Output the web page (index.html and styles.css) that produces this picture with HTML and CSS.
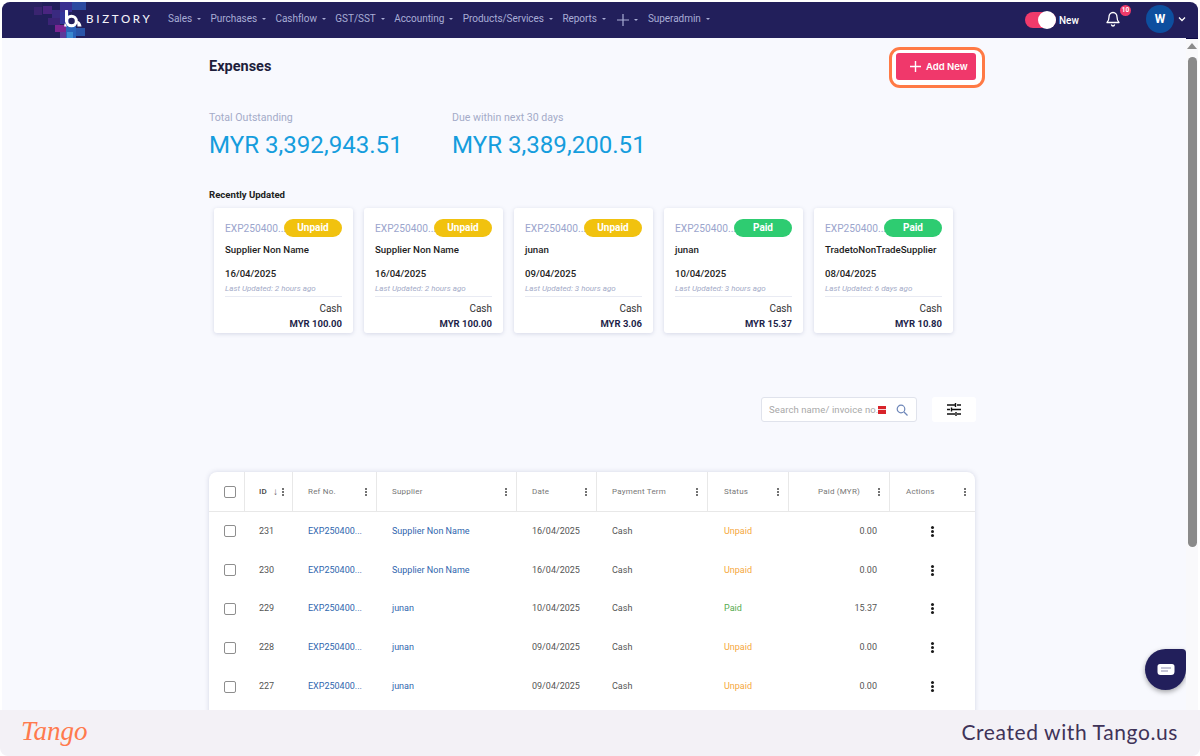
FILE: index.html
```html
<!DOCTYPE html>
<html lang="en">
<head>
<meta charset="utf-8">
<title>Expenses - Biztory</title>
<link rel="stylesheet" href="styles.css">
</head>
<body>
<div class="frame">
  <div class="app">
    <header class="topbar">
      <svg class="mosaic" width="70" height="36" viewBox="0 0 70 36">
        <rect x="0" y="0" width="22" height="8" fill="#2a2260"/>
        <rect x="14" y="5" width="8" height="8" fill="#3a2470"/>
        <rect x="23" y="4" width="9" height="8" fill="#4a2580"/>
        <rect x="32" y="8" width="8" height="8" fill="#3a2a80"/>
        <rect x="40" y="0" width="12" height="10" fill="#3a2f90"/>
        <rect x="52" y="0" width="14" height="8" fill="#2c4aa0"/>
        <rect x="40" y="10" width="9" height="12" fill="#33359a"/>
        <rect x="28" y="16" width="12" height="7" fill="#3b2376"/>
        <rect x="35" y="23" width="11" height="7" fill="#7a2490"/>
        <rect x="46" y="22" width="10" height="14" fill="#2a62b8"/>
        <rect x="56" y="26" width="9" height="8" fill="#2a55a8"/>
        <rect x="47" y="30" width="6" height="6" fill="#3a8ad0"/>
        <rect x="40" y="30" width="6" height="6" fill="#5a3a9a"/>
      </svg>
      <div class="brand">
        <svg class="brand-icon" width="18" height="18" viewBox="0 0 18 18">
          <path d="M2.500 1v10" stroke="#fff" stroke-width="3" stroke-linecap="round" fill="none"/>
          <circle cx="7.500" cy="11" r="4.800" fill="none" stroke="#fff" stroke-width="3"/>
          <path d="M13 11c2.500 0 4 2 4.500 5.500h-4z" fill="#fff"/>
          <path d="M1 13c-.5 1-.8 2-.8 3.500H3z" fill="#fff"/>
        </svg>
        <span class="brand-name">BIZTORY</span>
      </div>
      <nav class="nav">
        <a class="nav-item">Sales<i class="caret"></i></a>
        <a class="nav-item">Purchases<i class="caret"></i></a>
        <a class="nav-item">Cashflow<i class="caret"></i></a>
        <a class="nav-item">GST/SST<i class="caret"></i></a>
        <a class="nav-item">Accounting<i class="caret"></i></a>
        <a class="nav-item">Products/Services<i class="caret"></i></a>
        <a class="nav-item nav-reports">Reports<i class="caret"></i></a>
        <a class="nav-item nav-plus"><svg width="12" height="12" viewBox="0 0 12 12"><path d="M6 0v12M0 6h12" stroke="#a9add6" stroke-width="1.200"/></svg><i class="caret"></i></a>
        <a class="nav-item">Superadmin<i class="caret"></i></a>
      </nav>
      <div class="top-right">
        <span class="toggle"><span class="knob"></span></span>
        <span class="toggle-label">New</span>
        <span class="bell">
          <svg width="14" height="16" viewBox="0 0 14 16"><path d="M7 1.500c-2.600 0-4 2-4 4.500 0 3-1 4.500-2 5.500h12c-1-1-2-2.500-2-5.500 0-2.500-1.400-4.500-4-4.500zM5.300 13.500c.3 1 1 1.500 1.700 1.500s1.400-.5 1.700-1.500" fill="none" stroke="#fff" stroke-width="1.300" stroke-linejoin="round"/></svg>
          <b class="badge">10</b>
        </span>
        <span class="avatar">W</span>
        <svg class="chev" width="8" height="6" viewBox="0 0 8 6"><path d="M1 1.500l3 3 3-3" fill="none" stroke="#fff" stroke-width="1.300"/></svg>
      </div>
    </header>
    <div class="body">
      <main class="main">
        <div class="page">
          <div class="title-row">
            <h1 class="title">Expenses</h1>
            <span class="add-ring">
              <button class="add-btn"><svg width="11" height="11" viewBox="0 0 11 11"><path d="M5.500 0v11M0 5.500h11" stroke="#fff" stroke-width="1.400"/></svg>Add New</button>
            </span>
          </div>
          <div class="stats">
            <div class="stat stat-first">
              <div class="stat-label">Total Outstanding</div>
              <div class="stat-value">MYR 3,392,943.51</div>
            </div>
            <div class="stat">
              <div class="stat-label">Due within next 30 days</div>
              <div class="stat-value">MYR 3,389,200.51</div>
            </div>
          </div>
          <h2 class="recent-title">Recently Updated</h2>
          <div class="cards">
            <article class="card">
              <div class="card-top"><span class="card-ref">EXP250400...</span><span class="pill pill-unpaid">Unpaid</span></div>
              <div class="card-name">Supplier Non Name</div>
              <div class="card-date">16/04/2025</div>
              <div class="card-updated">Last Updated: 2 hours ago</div>
              <div class="card-term">Cash</div>
              <div class="card-amount">MYR 100.00</div>
            </article>
            <article class="card">
              <div class="card-top"><span class="card-ref">EXP250400...</span><span class="pill pill-unpaid">Unpaid</span></div>
              <div class="card-name">Supplier Non Name</div>
              <div class="card-date">16/04/2025</div>
              <div class="card-updated">Last Updated: 2 hours ago</div>
              <div class="card-term">Cash</div>
              <div class="card-amount">MYR 100.00</div>
            </article>
            <article class="card">
              <div class="card-top"><span class="card-ref">EXP250400...</span><span class="pill pill-unpaid">Unpaid</span></div>
              <div class="card-name">junan</div>
              <div class="card-date">09/04/2025</div>
              <div class="card-updated">Last Updated: 3 hours ago</div>
              <div class="card-term">Cash</div>
              <div class="card-amount">MYR 3.06</div>
            </article>
            <article class="card">
              <div class="card-top"><span class="card-ref">EXP250400...</span><span class="pill pill-paid">Paid</span></div>
              <div class="card-name">junan</div>
              <div class="card-date">10/04/2025</div>
              <div class="card-updated">Last Updated: 3 hours ago</div>
              <div class="card-term">Cash</div>
              <div class="card-amount">MYR 15.37</div>
            </article>
            <article class="card">
              <div class="card-top"><span class="card-ref">EXP250400...</span><span class="pill pill-paid">Paid</span></div>
              <div class="card-name">TradetoNonTradeSupplier</div>
              <div class="card-date">08/04/2025</div>
              <div class="card-updated">Last Updated: 6 days ago</div>
              <div class="card-term">Cash</div>
              <div class="card-amount">MYR 10.80</div>
            </article>
          </div>
          <div class="tools">
            <div class="search">
              <span class="search-text">Search name/ invoice no.</span>
              <span class="search-flag"></span>
              <svg class="search-icon" width="12" height="12" viewBox="0 0 12 12"><circle cx="5" cy="5" r="3.800" fill="none" stroke="#6d86b8" stroke-width="1.200"/><path d="M8 8l3.500 3.500" stroke="#6d86b8" stroke-width="1.300"/></svg>
            </div>
            <button class="filter">
              <svg width="14" height="13" viewBox="0 0 14 13"><path d="M0 2h8M10 2h4M8.500 0v4M0 6.500h3M5 6.500h9M4.500 4.500v4M0 11h8M10 11h4M9 9v4" stroke="#111" stroke-width="1.400" fill="none"/></svg>
            </button>
          </div>
          <section class="table">
            <div class="row head">
              <div class="cell cell-check"><span class="check"></span></div>
              <div class="cell cell-id"><b>ID</b><span class="sort">↓</span><i class="kebab small"></i></div>
              <div class="cell">Ref No.<i class="kebab"></i></div>
              <div class="cell">Supplier<i class="kebab"></i></div>
              <div class="cell">Date<i class="kebab"></i></div>
              <div class="cell">Payment Term<i class="kebab"></i></div>
              <div class="cell cell-status">Status<i class="kebab"></i></div>
              <div class="cell cell-paid">Paid (MYR)<i class="kebab"></i></div>
              <div class="cell cell-status">Actions<i class="kebab"></i></div>
            </div>
            <div class="row">
              <div class="cell cell-check"><span class="check"></span></div>
              <div class="cell cell-id">231</div><div class="cell link">EXP250400...</div><div class="cell link">Supplier Non Name</div><div class="cell">16/04/2025</div><div class="cell">Cash</div><div class="cell cell-status unpaid">Unpaid</div><div class="cell num">0.00</div><div class="cell action"><i class="dots"></i></div>
            </div>
            <div class="row">
              <div class="cell cell-check"><span class="check"></span></div>
              <div class="cell cell-id">230</div><div class="cell link">EXP250400...</div><div class="cell link">Supplier Non Name</div><div class="cell">16/04/2025</div><div class="cell">Cash</div><div class="cell cell-status unpaid">Unpaid</div><div class="cell num">0.00</div><div class="cell action"><i class="dots"></i></div>
            </div>
            <div class="row">
              <div class="cell cell-check"><span class="check"></span></div>
              <div class="cell cell-id">229</div><div class="cell link">EXP250400...</div><div class="cell link">junan</div><div class="cell">10/04/2025</div><div class="cell">Cash</div><div class="cell cell-status paid">Paid</div><div class="cell num">15.37</div><div class="cell action"><i class="dots"></i></div>
            </div>
            <div class="row">
              <div class="cell cell-check"><span class="check"></span></div>
              <div class="cell cell-id">228</div><div class="cell link">EXP250400...</div><div class="cell link">junan</div><div class="cell">09/04/2025</div><div class="cell">Cash</div><div class="cell cell-status unpaid">Unpaid</div><div class="cell num">0.00</div><div class="cell action"><i class="dots"></i></div>
            </div>
            <div class="row">
              <div class="cell cell-check"><span class="check"></span></div>
              <div class="cell cell-id">227</div><div class="cell link">EXP250400...</div><div class="cell link">junan</div><div class="cell">09/04/2025</div><div class="cell">Cash</div><div class="cell cell-status unpaid">Unpaid</div><div class="cell num">0.00</div><div class="cell action"><i class="dots"></i></div>
            </div>
          </section>
        </div>
        <button class="chat">
          <svg width="18" height="14" viewBox="0 0 18 14"><path d="M3 1h12a2.500 2.500 0 0 1 2.500 2.500v5A3.500 3.500 0 0 1 14 12H3.500A3 3 0 0 1 .5 9V3.500A2.500 2.500 0 0 1 3 1z" fill="#fff"/><path d="M4 5h10M4 8h7" stroke="#8d8bb0" stroke-width="1"/></svg>
        </button>
      </main>
      <aside class="scrollbar">
        <span class="arrow"></span>
        <span class="thumb"></span>
      </aside>
    </div>
  </div>
  <footer class="footer">
    <span class="tango">Tango</span>
    <span class="created">Created with Tango.us</span>
  </footer>
</div>
</body>
</html>
```

FILE: styles.css
```css
* { box-sizing: border-box; }
html, body { margin: 0; height: 100%; overflow: hidden; background: #fff; }
body { font-family: Roboto, "Liberation Sans", sans-serif; color: #333; }
i { font-style: normal; }
button { border: 0; padding: 0; font: inherit; cursor: pointer; }

.frame { width: 1200px; height: 756px; display: flex; flex-direction: column; background: #fff; }
.app { height: 710px; padding: 2px 2px 0; display: flex; flex-direction: column; }

/* Top bar */
.topbar { position: relative; height: 36px; flex: none; display: flex; align-items: center; padding-bottom: 3px; background: #221f5b; border-radius: 8px 8px 0 0; box-shadow: 0 1px 0 #0d0b45; overflow: hidden; color: #fff; }
.mosaic { position: absolute; left: 18px; top: 0; }
.brand { position: relative; display: flex; align-items: center; margin-left: 62px; width: 104px; }
.brand-icon { flex: none; }
.brand-name { margin-left: 4px; font: 500 11.500px Lato, sans-serif; letter-spacing: 2.700px; color: #f2f2f8; }
.nav { display: flex; align-items: center; }
.nav-item { display: flex; align-items: center; font-size: 10px; letter-spacing: -.05px; color: #a9add6; white-space: nowrap; margin-right: 9.500px; }
.nav-reports { margin-right: 11.500px; }
.nav-plus { margin-top: 2px; }
.caret { margin-left: 5px; width: 0; height: 0; border: 2.200px solid transparent; border-top: 2.400px solid #a9add6; border-bottom: 0; }
.top-right { margin-left: auto; display: flex; align-items: center; }
.toggle { position: relative; width: 31px; height: 16px; margin-top: 3px; border-radius: 8px; background: #f03a6b; }
.knob { position: absolute; right: 0; top: -1px; width: 18px; height: 18px; border-radius: 50%; background: #fff; }
.toggle-label { margin-left: 3px; margin-top: 3px; font-size: 10px; font-weight: 500; width: 47px; }
.bell { position: relative; display: flex; margin-right: 26px; }
.badge { position: absolute; left: 14px; top: -6px; width: 11px; height: 11px; border-radius: 50%; background: #ef3a6a; font-size: 6.500px; line-height: 11px; text-align: center; color: #fff; }
.avatar { width: 28px; height: 28px; border-radius: 50%; background: #0d4f9f; display: flex; align-items: center; justify-content: center; font-size: 12px; font-weight: 700; }
.chev { margin: 0 12px 0 4px; }

/* Layout */
.body { flex: 1; min-height: 0; display: flex; }
.main { position: relative; flex: 1; min-width: 0; background: #f8f9fe; overflow: hidden; }
.page { width: 769px; margin-left: 206px; }
.scrollbar { flex: none; width: 12px; background: #f9f9fb; display: flex; flex-direction: column; align-items: center; }
.arrow { margin-top: 5px; width: 0; height: 0; border: 5px solid transparent; border-bottom: 6px solid #8c8c8c; border-top: 0; }
.thumb { margin-top: 8px; width: 9px; height: 490px; border-radius: 5px; background: #8a8a8a; }

/* Heading */
.title-row { display: flex; align-items: center; justify-content: space-between; height: 41px; margin-top: 9px; }
.title { margin: 0 0 3px 1px; font-size: 14.500px; font-weight: 700; color: #1e1e3c; }
.add-ring { display: block; padding: 3px 6px 5px 4px; margin-right: -8px; border: 3px solid #ff7a45; border-radius: 11px; background: #fff; }
.add-btn { display: flex; align-items: center; gap: 5px; width: 80px; height: 27px; padding-left: 14px; border-radius: 3px; background: #f0386b; color: #fff; font: 600 9.500px Inter, sans-serif; }
.stats { display: flex; margin-top: 23px; }
.stat-first { width: 243px; }
.stat-label { margin-left: 1px; font-size: 10.600px; line-height: 13px; color: #a4abc8; }
.stat-value { margin: 7px 0 0 1px; font-size: 24.100px; line-height: 29px; color: #159ddd; }
.recent-title { margin: 29px 0 0 1px; font-size: 9.600px; line-height: 12px; font-weight: 700; color: #222; }

/* Cards */
.cards { display: flex; gap: 11px; margin: 7px 0 0 6px; }
.card { width: 139px; height: 125px; padding: 11px 11px 0; border-radius: 3px; background: #fff; box-shadow: 0 1px 4px rgba(60, 70, 130, .18); }
.card-top { display: flex; align-items: center; justify-content: space-between; height: 18px; }
.card-ref { min-width: 0; font-size: 10.200px; color: #9ba5cd; white-space: nowrap; }
.pill { flex: none; width: 58px; height: 18px; border-radius: 9px; text-align: center; font-size: 10px; font-weight: 700; line-height: 18px; color: #fff; }
.pill-unpaid { background: #f1c20f; }
.pill-paid { background: #2ecc71; }
.card-name { margin-top: 6px; font-size: 9.700px; line-height: 13px; font-weight: 500; color: #1d1d1d; }
.card-date { margin-top: 11px; font-size: 9.600px; line-height: 13px; font-weight: 500; color: #222; }
.card-updated { margin-top: 4px; padding-bottom: 2px; font-size: 8px; line-height: 10px; font-style: italic; color: #a4abc8; border-bottom: 1px solid #e9ebf3; }
.card-term { margin-top: 5px; text-align: right; font-size: 10px; line-height: 14px; color: #333; }
.card-amount { margin-top: 1px; text-align: right; font-size: 9.500px; line-height: 14px; font-weight: 700; color: #1d1f4a; }

/* Tools */
.tools { display: flex; justify-content: flex-end; gap: 15px; margin-top: 64px; margin-right: 1px; }
.search { display: flex; align-items: center; width: 156px; height: 25px; padding-left: 7px; border: 1px solid #e0e3ec; border-radius: 3px; background: #fff; }
.search-text { width: 109px; flex: none; font-size: 9.500px; letter-spacing: .1px; color: #a8a8a8; white-space: nowrap; }
.search-flag { width: 8px; height: 8px; flex: none; margin-right: 10px; background: linear-gradient(#d8232a 0 3px, #f5d5d5 3px 4px, #d8232a 4px); }
.filter { width: 44px; height: 25px; border-radius: 3px; background: #fff; display: flex; align-items: center; justify-content: center; }

/* Table */
.table { margin: 50px 0 0 1px; padding-bottom: 30px; width: 766px; background: #fff; border-radius: 8px 8px 0 0; box-shadow: 0 0 5px rgba(50, 60, 110, .18); }
.row { display: grid; grid-template-columns: 36px 48px 84px 140px 80px 111px 81px 101px 85px; height: 38.800px; font-size: 9px; color: #555; }
.head { height: 40px; border-bottom: 1px solid #e8e8e8; font-size: 8px; letter-spacing: .2px; color: #777; }
.cell { position: relative; display: flex; align-items: center; padding: 0 0 1px 15px; white-space: nowrap; }
.head .cell { padding-bottom: 0; border-right: 1px solid #e8e8e8; }
.head .cell:last-child { border-right: 0; }
.cell.cell-id { padding-left: 14px; }
.cell.cell-status { padding-left: 16px; }
.cell.cell-check { justify-content: center; padding: 0 0 0 6px; }
.check { width: 12px; height: 12px; border: 1px solid #8e8e8e; border-radius: 2px; background: #fff; }
.cell-id b { font-weight: 500; color: #444; }
.sort { margin-left: 6px; font-size: 10px; color: #666; }
.kebab { position: absolute; right: 9px; top: 50%; width: 2px; height: 2px; margin-top: -4px; border-radius: 50%; background: #444; box-shadow: 0 3px 0 #444, 0 6px 0 #444; }
.kebab.small { right: 8px; }
.head .cell.cell-paid { justify-content: flex-end; padding: 0 29px 0 0; }
.link { color: #2f66ae; }
.unpaid { color: #f5a83e; }
.paid { color: #55ab4f; }
.cell.num { justify-content: flex-end; padding: 0 13px 1px 0; }
.cell.action { justify-content: flex-start; padding: 0 0 0 41px; }
.dots { width: 3px; height: 3px; border-radius: 50%; background: #1a1a1a; box-shadow: 0 -4px 0 #1a1a1a, 0 4px 0 #1a1a1a; }

/* Chat launcher */
.chat { position: absolute; right: 0; bottom: 20px; width: 41px; height: 41px; border-radius: 50% 4px 50% 50%; background: #221f5b; box-shadow: 0 2px 5px rgba(0, 0, 0, .35); display: flex; align-items: center; justify-content: center; }

/* Footer */
.footer { height: 46px; flex: none; display: flex; align-items: center; justify-content: space-between; padding: 0 22px 3px 21px; background: #f3f1f6; border-radius: 0 0 8px 8px; }
.tango { font: italic 400 27px "Liberation Serif", serif; color: #ff7a4d; }
.created { font: 400 21px Lato, sans-serif; letter-spacing: .6px; color: #3f3358; }
```
